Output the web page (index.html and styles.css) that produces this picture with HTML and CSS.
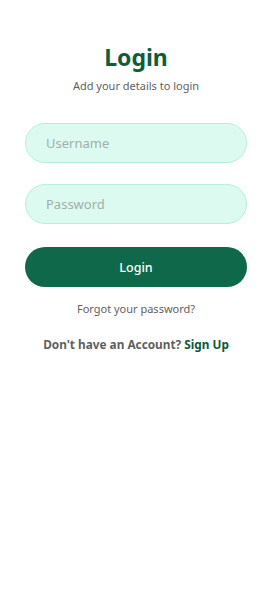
FILE: index.html
```html
<!DOCTYPE html>
<html lang="en">
<head>
  <meta charset="UTF-8" />
  <meta name="viewport" content="width=device-width, initial-scale=1.0"/>
  <title>login</title>
  <link rel="stylesheet" href="styles.css">
</head>
<body>

  <div class="login-container">
    <h2>Login</h2>
    <p class="subtitle">Add your details to login</p>
    <form class="login-form">
      <input type="text" placeholder="Username" />
      <input type="password" placeholder="Password" />
      <button type="submit">Login</button>
    </form>
    <p class="forgot">Forgot your password?</p>
    <p class="signup">Don't have an Account? <a href="#">Sign Up</a></p>
  </div>

</body>
</html>
```

FILE: styles.css
```css
body {
  margin: 0;
  font-family: 'Noto Sans', 'DejaVu Sans', sans-serif;
  background-color: #ffffff;
  color: #5f5f5f;
}

.login-container {
  display: flex;
  flex-direction: column;
  align-items: center;
  padding: 42px 26px 0 25px;
}

.login-container h2 {
  margin: 0;
  font-size: 23px;
  line-height: 30px;
  font-weight: 700;
  color: #0f5c3b;
}

.subtitle {
  margin: 7px 0 0;
  font-size: 11px;
  line-height: 14px;
  color: #5f5f5f;
}

.login-form {
  width: 100%;
  display: flex;
  flex-direction: column;
  gap: 21px;
  margin-top: 30px;
}

input {
  box-sizing: border-box;
  width: 100%;
  height: 40px;
  padding: 0 20px;
  border: 1px solid #b3f0dd;
  border-radius: 20px;
  background-color: #dcfaf0;
  font-family: inherit;
  font-size: 13px;
  outline: none;
}

input::placeholder {
  color: #a3aeaa;
}

button {
  height: 40px;
  margin-top: 2px;
  border: none;
  border-radius: 20px;
  background-color: #10684a;
  color: #ffffff;
  font-family: inherit;
  font-size: 12.5px;
  font-weight: 500;
  cursor: pointer;
}

.forgot {
  margin: 15px 0 0;
  font-size: 11px;
  line-height: 14px;
  color: #5f5f5f;
}

.signup {
  margin: 20px 0 0;
  font-size: 11.8px;
  line-height: 16px;
  font-weight: 700;
  color: #5f5f5f;
}

.signup a {
  color: #0b5a38;
  text-decoration: none;
}
```
